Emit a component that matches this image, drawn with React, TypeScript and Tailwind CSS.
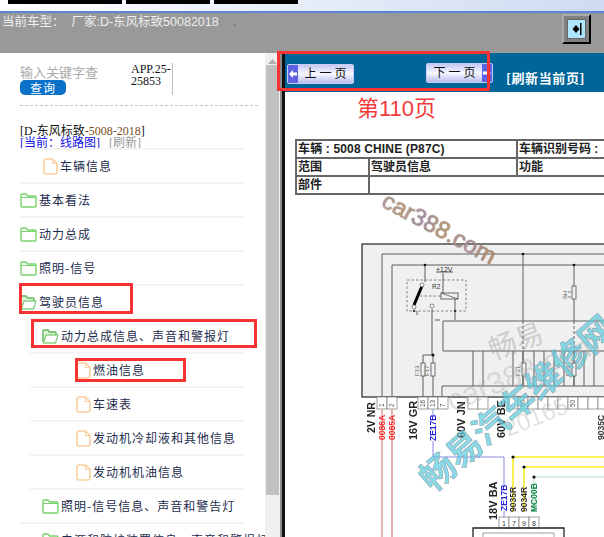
import React from 'react';

const navy = 'text-[#1c2c4c]';

const FileIcon = () => (
  <svg width="15" height="17" viewBox="0 0 15 17" fill="none" className="shrink-0">
    <path d="M3 1h6.500L14 5.500V14a2 2 0 0 1-2 2H3a2 2 0 0 1-2-2V3a2 2 0 0 1 2-2z" stroke="#fbd09f" strokeWidth="1.6" fill="#fff" />
    <path d="M9.500 1v4.500H14" stroke="#fbd09f" strokeWidth="1.1" />
  </svg>
);

const FolderIcon = () => (
  <svg width="17" height="15" viewBox="0 0 17 15" fill="none" className="shrink-0">
    <path d="M1 3V2a1 1 0 0 1 1-1h4l1.500 2H15a1 1 0 0 1 1 1v9a1 1 0 0 1-1 1H2a1 1 0 0 1-1-1V3z" stroke="#78d46c" strokeWidth="1.4" fill="#fff" />
    <path d="M1 4.500h15" stroke="#78d46c" strokeWidth="1" />
  </svg>
);

const OpenFolderIcon = () => (
  <svg width="17" height="15" viewBox="0 0 17 15" fill="none" className="shrink-0">
    <path d="M1 13V2a1 1 0 0 1 1-1h4l1.500 2H13a1 1 0 0 1 1 1v2" stroke="#5fb558" strokeWidth="1.4" fill="#dff3da" />
    <path d="M1.500 14L4 6h12l-2.500 8H1.500z" stroke="#8ccf80" strokeWidth="1.3" fill="#fff" />
  </svg>
);

type Row = { label: string; icon: 'file' | 'folder' | 'open'; pad: string; line: string };

const rows: Row[] = [
  { label: '车辆信息', icon: 'file', pad: 'pl-[43px]', line: 'ml-[20px]' },
  { label: '基本看法', icon: 'folder', pad: 'pl-[20px]', line: 'ml-[20px]' },
  { label: '动力总成', icon: 'folder', pad: 'pl-[20px]', line: 'ml-[20px]' },
  { label: '照明-信号', icon: 'folder', pad: 'pl-[20px]', line: 'ml-[20px]' },
  { label: '驾驶员信息', icon: 'open', pad: 'pl-[20px]', line: 'ml-[20px]' },
  { label: '动力总成信息、声音和警报灯', icon: 'open', pad: 'pl-[42px]', line: 'ml-[20px]' },
  { label: '燃油信息', icon: 'file', pad: 'pl-[76px]', line: 'ml-[30px]' },
  { label: '车速表', icon: 'file', pad: 'pl-[76px]', line: 'ml-[30px]' },
  { label: '发动机冷却液和其他信息', icon: 'file', pad: 'pl-[76px]', line: 'ml-[30px]' },
  { label: '发动机机油信息', icon: 'file', pad: 'pl-[76px]', line: 'ml-[30px]' },
  { label: '照明-信号信息、声音和警告灯', icon: 'folder', pad: 'pl-[42px]', line: 'ml-[30px]' },
  { label: '电源和防护装置信息、声音和警报灯', icon: 'folder', pad: 'pl-[42px]', line: 'ml-[20px]' },
];

const TreeRow = ({ row }: { row: Row }) => (
  <div className="h-[34px] shrink-0">
    <div className={`h-[2px] w-auto mr-[21px] bg-[#f4f4f4] ${row.line}`} />
    <div className={`h-[32px] flex items-center gap-[1px] whitespace-nowrap text-[12px] tracking-[1px] ${navy} ${row.pad}`}>
      {row.icon === 'file' && <FileIcon />}
      {row.icon === 'folder' && <FolderIcon />}
      {row.icon === 'open' && <OpenFolderIcon />}
      <span className="ml-[1px]">{row.label}</span>
    </div>
  </div>
);

const PageButton = ({ label, side, className }: { label: string; side: 'left' | 'right'; className: string }) => (
  <div className={`h-[20px] w-[67px] flex items-stretch rounded-[2px] border border-[#c9ccf6] bg-gradient-to-b from-[#c6c8f2] via-[#f8f8ff] to-[#b9bcf0] overflow-hidden ${className}`}>
    {side === 'left' && (
      <div className="w-[10px] bg-[#5d62e2] flex items-center justify-center">
        <svg width="8" height="10" viewBox="0 0 8 10"><path d="M0 5l4-4v2.500h4v3H4V9z" fill="#fff" /></svg>
      </div>
    )}
    <div className="flex-1 flex items-center justify-center text-[12px] text-[#111] whitespace-pre font-['Liberation_Serif','Noto_Sans_CJK_SC',serif]">{label}</div>
    {side === 'right' && (
      <div className="w-[10px] bg-[#5d62e2] flex items-center justify-center">
        <svg width="8" height="10" viewBox="0 0 8 10"><path d="M8 5L4 1v2.500H0v3h4V9z" fill="#fff" /></svg>
      </div>
    )}
  </div>
);

// wiring diagram, drawn in page coordinates
const Diagram = () => {
  const busLines = [473, 483, 513, 523, 534, 544, 554, 564, 574, 584, 594];
  const pins = [
    { x: 377, t: '1' }, { x: 387, t: '2' }, { x: 418, t: '16' }, { x: 428, t: '13' }, { x: 438, t: '7' },
    { x: 468, t: '' }, { x: 478, t: '' }, { x: 508, t: '' }, { x: 518, t: '60' }, { x: 528, t: '' },
    { x: 538, t: '' }, { x: 548, t: '' }, { x: 558, t: '' }, { x: 568, t: '50' }, { x: 578, t: '' },
    { x: 588, t: '' }, { x: 598, t: '' },
  ];
  const vert = (x: number, y: number, t: string, fill: string, size = 8, weight = 700) => (
    <text key={t + x} transform={`rotate(-90 ${x} ${y})`} x={x} y={y} fontSize={size} fontWeight={weight} fill={fill} fontFamily="Liberation Sans, sans-serif">{t}</text>
  );
  return (
    <svg width="319" height="342" viewBox="285 195 319 342" className="block blur-[0.4px]">
      <defs>
        <linearGradient id="wm" x1="0" y1="0" x2="1" y2="0">
          <stop offset="0" stopColor="#b8a0a8" />
          <stop offset="0.15" stopColor="#d0a070" />
          <stop offset="0.35" stopColor="#a890b8" />
          <stop offset="0.55" stopColor="#c8a060" />
          <stop offset="0.75" stopColor="#b090b0" />
          <stop offset="1" stopColor="#c89050" />
        </linearGradient>
      </defs>

      <rect x="362" y="244" width="260" height="153" fill="#f0f0f0" stroke="#222" strokeWidth="1.2" />
      <g stroke="#5c5c5c" strokeWidth="1" fill="none">
        <path d="M382 397V254H604M392 397V265H604" />
        <path d="M443 351V321H604M443 351H604M442 397V386H604" />
        <path d="M523 254V321M574 265V321" />
        <path d="M523 321V351M574 321V351" strokeDasharray="3 2" />
        <path d="M523 351V386M574 351V386" />
        {busLines.map((x) => <path key={x} d={`M${x} 351V386`} />)}
        <path d="M423 397V355H433M433 397V355" />
        <path d="M432 309V355M425 265V282M443 273V293M455 299V320" />
        <path d="M436 272H453" />
        <path d="M417 311V315M435 320H440" />
      </g>
      <rect x="407" y="280" width="59" height="31" fill="none" stroke="#555" strokeWidth="0.7" strokeDasharray="2.500 2" />
      <path d="M420 296H441" stroke="#555" strokeWidth="0.7" strokeDasharray="2.500 2" />
      <path d="M422 286L414 305" stroke="#000" strokeWidth="3" />
      <circle cx="422" cy="285" r="2" fill="#fff" stroke="#555" strokeWidth="0.7" />
      <circle cx="414" cy="307" r="2" fill="#fff" stroke="#555" strokeWidth="0.7" />
      <circle cx="432" cy="306" r="2" fill="#fff" stroke="#555" strokeWidth="0.7" />
      <rect x="441" y="293" width="17" height="6" fill="#f0f0f0" stroke="#444" strokeWidth="0.8" />
      <path d="M441 293L458 299" stroke="#444" strokeWidth="0.7" />
      <text x="436" y="272" fontSize="7" fill="#333" fontFamily="Liberation Sans, sans-serif">+12V</text>
      <text x="432" y="289" fontSize="6.500" fill="#333" fontFamily="Liberation Sans, sans-serif">R2</text>
      <g fill="#111">
        <circle cx="425" cy="265" r="1.300" /><circle cx="523" cy="254" r="1.300" /><circle cx="574" cy="265" r="1.300" />
        <circle cx="433" cy="355" r="1.500" /><circle cx="455" cy="311" r="1" /><circle cx="414" cy="311" r="1" />
      </g>
      <g fill="#f0f0f0" stroke="#555" strokeWidth="0.8">
        <rect x="421" y="363" width="4" height="13" /><rect x="431" y="363" width="4" height="13" />
        <rect x="522" y="363" width="4" height="13" /><rect x="572" y="363" width="4" height="13" />
        <rect x="572" y="286" width="4" height="13" />
      </g>
      <path d="M571 292h-3M571 297h-3" stroke="#555" strokeWidth="0.8" />
      {vert(419, 376, 'F13', '#555', 6, 400)}
      {vert(429, 376, 'F17', '#555', 6, 400)}
      {vert(520, 376, 'F21', '#555', 6, 400)}
      {vert(570, 376, 'F23', '#555', 6, 400)}
      {vert(567, 299, 'SH', '#555', 6, 400)}

      {pins.map((p) => (
        <g key={p.x}>
          <rect x={p.x} y="397" width="10" height="12" fill="#fff" stroke="#777" strokeWidth="0.7" />
          {p.t && vert(p.x + 7, 407, p.t, '#555', 6.500, 400)}
        </g>
      ))}

      <path d="M382 409V537M392 409V537" stroke="#e0a0a0" strokeWidth="1.6" />
      <path d="M433 409V416M433 441V457H504V486M504 511V517" stroke="#7a7ce0" strokeWidth="0.9" fill="none" />
      <path d="M513 512V457H604M524 512V467H604" stroke="#f5ef20" strokeWidth="1.6" fill="none" />
      <path d="M534 512V477H604" stroke="#b5d5cf" strokeWidth="1" fill="none" />
      <circle cx="513" cy="457" r="1.600" fill="#111" /><circle cx="524" cy="467" r="1.600" fill="#111" /><circle cx="534" cy="477" r="1.600" fill="#111" />

      {vert(375, 433, '2V NR', '#222', 10.500)}
      {vert(417, 440, '16V GR', '#222', 11)}
      {vert(465, 438, '60V JN', '#222', 11)}
      {vert(505, 438, '60V BE', '#222', 11)}
      {vert(497, 520, '18V BA', '#222', 11)}
      {vert(385, 440, '0086A', '#ee2b2b', 8.500)}
      {vert(395, 440, '0085A', '#ee2b2b', 8.500)}
      {vert(436, 441, 'ZE17B', '#2222dd', 8.500)}
      {vert(507, 511, 'ZE17B', '#2222dd', 8.500)}
      {vert(516, 512, '9035R', '#333', 8.500)}
      {vert(527, 512, '9034R', '#333', 8.500)}
      {vert(537, 512, 'MC00B', '#118844', 8.500)}
      {vert(604, 440, '9035C', '#333', 8.500)}

      {[{ x: 499, t: '1' }, { x: 509, t: '7' }, { x: 519, t: '9' }, { x: 529, t: '8' }].map((p) => (
        <g key={p.x}>
          <rect x={p.x} y="517" width="10" height="11" fill="#fff" stroke="#777" strokeWidth="0.7" />
          <text x={p.x + 3} y="526" fontSize="7" fill="#333" fontFamily="Liberation Sans, sans-serif">{p.t}</text>
        </g>
      ))}
      <path d="M473 537V528H564V537" fill="none" stroke="#222" strokeWidth="1.300" />
      <path d="M483 537V533H554V537" fill="none" stroke="#888" strokeWidth="0.8" />

      {/* watermarks */}
      <text transform="rotate(28 380 206)" x="380" y="206" fontSize="24" fontWeight="400" fill="url(#wm)" stroke="#8a7a70" strokeWidth="0.6" fontFamily="Liberation Sans, sans-serif">car388.com</text>
      <text transform="rotate(-20 493 360)" x="493" y="360" fontSize="28" fill="#999" fillOpacity="0.42" fontFamily="Noto Sans CJK SC, sans-serif">畅易</text>
      <text transform="rotate(-22 452 412)" x="452" y="412" fontSize="31" fill="#aaa" fillOpacity="0.35" fontFamily="Liberation Sans, sans-serif">car388.com</text>
      <text transform="rotate(-22 508 437)" x="508" y="437" fontSize="24" fill="#aaa" fillOpacity="0.35" fontFamily="Liberation Sans, sans-serif">20165</text>
      <text transform="rotate(-41 433 493)" x="433" y="493" fontSize="35" fontWeight="700" fill="#5ecbdc" fillOpacity="0.72" stroke="#8aa0a8" strokeWidth="0.5" fontFamily="Noto Sans CJK SC, sans-serif">畅易汽车维修网</text>
    </svg>
  );
};

export default function App() {
  return (
    <div className="relative w-[604px] h-[537px] overflow-hidden bg-white font-['Noto_Sans_CJK_SC',sans-serif]">
      {/* window top strip */}
      <div className="h-[11px] bg-gradient-to-r from-[#ffffff] to-[#cfdbf2] flex gap-[4px] pl-[8px] items-start">
        <div className="w-[114px] h-[4px] bg-black" />
        <div className="w-[84px] h-[4px] bg-black" />
        <div className="w-[84px] h-[4px] bg-black" />
      </div>
      <div className="h-[2px] bg-[#5b86d4]" />

      {/* gray band */}
      <div className="h-[40px] bg-[#999999] flex items-start justify-between pr-[13px]">
        <div className="pl-[2px] pt-[1px] text-[12.5px] leading-[16px] text-[#eeeeee] whitespace-pre font-['Liberation_Sans','Noto_Sans_CJK_SC',sans-serif]">当前车型：  厂家:D-东风标致50082018<span className="ml-[14px] text-[#555]">.</span></div>
        <div className="mt-[1px] w-[29px] h-[30px] bg-[#808080] border-2 border-t-[#aaaaaa] border-l-[#aaaaaa] border-r-black border-b-black p-[3px]">
          <div className="w-full h-full bg-[#aee6ff] flex items-center justify-center border border-[#666]">
            <svg width="10" height="12" viewBox="0 0 10 12"><path d="M4 2L0.500 6 4 10l3.500-4zM8 0v12h1.500V0z" fill="#000" /></svg>
          </div>
        </div>
      </div>

      <div className="flex h-[484px]">
        {/* tree panel */}
        <div className="w-[265px] shrink-0 overflow-hidden flex flex-col">
          <div className="ml-[20px] mt-[10px] h-[32px] flex">
            <div className="w-[111px]">
              <div className="text-[13px] leading-[14px] mt-[2px] mb-[1px] text-[#aaaaaa]">输入关键字查</div>
              <div className="w-[46px] h-[15px] rounded-[5px] bg-[#0b72c9] text-white text-[12px] leading-[15px] text-center tracking-[1px]">查询</div>
            </div>
            <div className="w-[42px] border-r border-[#bbbbbb] text-[12px] leading-[12px] text-[#111] break-all font-['Liberation_Serif',serif]">APP.25-25853</div>
          </div>
          <div className="ml-[20px] mr-[7px] mt-[10px] border-t border-dashed border-[#c4c4c4]" />
          <div className="ml-[20px] mt-[19px] h-[23px] text-[12px] leading-[12px] whitespace-nowrap font-['Liberation_Serif','Noto_Sans_CJK_SC',serif]">
            <div className="text-[#111]">[D-东风标致<span className="text-[#7a4a20]">-5008-2018</span>]</div>
            <div><span className="text-[#1212e6]">[当前：线路图]</span><span className="text-[#999999] ml-[9px]">[刷新]</span></div>
          </div>
          {rows.map((r) => <TreeRow key={r.label} row={r} />)}
        </div>

        {/* scrollbar */}
        <div className="w-[15px] shrink-0 bg-[#f0f0f0] pl-[1px] pr-[1px]">
          <div className="h-[12px] flex items-center justify-center pt-[5px]">
            <svg width="9" height="5" viewBox="0 0 9 5"><path d="M4.500 0L9 5H0z" fill="#b0b0b0" /></svg>
          </div>
          <div className="h-[430px] bg-[#c0c0c0]" />
        </div>
        <div className="w-[2px] shrink-0 bg-[#8a8a8a] " />
        <div className="w-[3px] shrink-0 bg-[#111111]" />

        {/* document panel */}
        <div className="flex-1 min-w-0 overflow-hidden">
          <div className="h-[39px] bg-[#006699] flex items-start">
            <PageButton label="上 一 页" side="left" className="mt-[11px] ml-[2px]" />
            <PageButton label="下 一 页" side="right" className="mt-[10px] ml-[72px]" />
            <div className="mt-[16px] ml-[13px] text-[13px] leading-[18px] font-bold tracking-[0.6px] text-white whitespace-nowrap">[刷新当前页]</div>
          </div>
          <div className="h-[47px] pl-[72px] pt-[3px] text-[22px] leading-[28px] text-[#f23a3a] font-['Liberation_Sans','Noto_Sans_CJK_SC',sans-serif]">第110页</div>
          <div className="ml-[10px] h-[56px] w-[420px] overflow-visible">
            <table className="table-fixed border-collapse w-[420px] text-[12px] font-bold leading-[16px] text-[#222] font-['Liberation_Sans','Noto_Sans_CJK_SC',sans-serif]">
              <colgroup>
                <col className="w-[73px]" />
                <col className="w-[148px]" />
                <col />
              </colgroup>
              <tbody>
                <tr className="h-[18px]">
                  <td colSpan={2} className="border-2 border-[#666666] px-[1px] tracking-[0.15px]">车辆 : 5008 CHINE (P87C)</td>
                  <td className="border-2 border-[#666666] px-[1px] whitespace-nowrap">车辆识别号码 :</td>
                </tr>
                <tr className="h-[18px]">
                  <td className="border-2 border-[#666666] px-[1px]">范围</td>
                  <td className="border-2 border-[#666666] px-[1px]">驾驶员信息</td>
                  <td className="border-2 border-[#666666] px-[1px]">功能</td>
                </tr>
                <tr className="h-[18px]">
                  <td className="border-2 border-[#666666] px-[1px]">部件</td>
                  <td colSpan={2} className="border-2 border-[#666666] px-[1px]"></td>
                </tr>
              </tbody>
            </table>
          </div>
          <Diagram />
        </div>
      </div>

      {/* red annotation boxes drawn over the screenshot */}
      <div className="absolute left-[277px] top-[51px] w-[213px] h-[40px] border-[3px] border-[#f53333]" />
      <div className="absolute left-[19px] top-[283px] w-[114px] h-[31px] border-[3px] border-[#f53333]" />
      <div className="absolute left-[31px] top-[319px] w-[226px] h-[29px] border-[3px] border-[#f53333]" />
      <div className="absolute left-[75px] top-[358px] w-[111px] h-[24px] border-[3px] border-[#f53333]" />
    </div>
  );
}
